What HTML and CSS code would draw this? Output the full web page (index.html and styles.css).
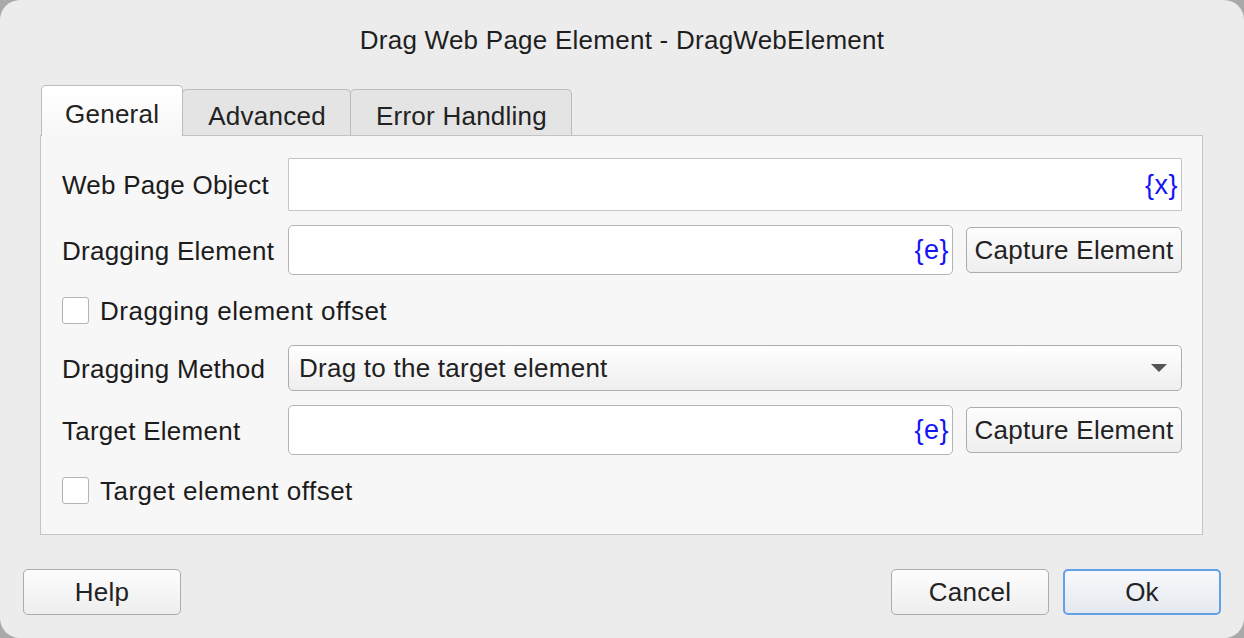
FILE: index.html
```html
<!DOCTYPE html>
<html>
<head>
<meta charset="utf-8">
<link rel="stylesheet" href="styles.css">
</head>
<body>
<div class="dialog">
  <div class="title">Drag Web Page Element - DragWebElement</div>
  <div class="tabs">
    <div class="tab active">General</div>
    <div class="tab">Advanced</div>
    <div class="tab">Error Handling</div>
  </div>
  <div class="panel">
    <div class="row row-obj">
      <span class="lbl">Web Page Object</span>
      <div class="field flat"><span class="var">{x}</span></div>
    </div>
    <div class="row row-el">
      <span class="lbl">Dragging Element</span>
      <div class="field round"><span class="var">{e}</span></div>
      <button class="btn cap">Capture Element</button>
    </div>
    <div class="check-row">
      <span class="box"></span>
      <span class="check-text">Dragging element offset</span>
    </div>
    <div class="row row-sel">
      <span class="lbl">Dragging Method</span>
      <div class="select">
        <span class="sel-text">Drag to the target element</span>
        <span class="arrow"></span>
      </div>
    </div>
    <div class="row row-el">
      <span class="lbl">Target Element</span>
      <div class="field round"><span class="var">{e}</span></div>
      <button class="btn cap">Capture Element</button>
    </div>
    <div class="check-row">
      <span class="box"></span>
      <span class="check-text">Target element offset</span>
    </div>
  </div>
  <div class="footer">
    <button class="btn foot">Help</button>
    <div class="spacer"></div>
    <button class="btn foot">Cancel</button>
    <button class="btn foot ok">Ok</button>
  </div>
</div>
</body>
</html>
```

FILE: styles.css
```css
* { box-sizing: border-box; }
html, body { margin: 0; padding: 0; }
body {
  background: #a9a9a9;
  font-family: "Liberation Sans", Arial, sans-serif;
  font-size: 26px;
  letter-spacing: 0.25px;
  color: #1c1c1c;
}
.dialog {
  width: 1244px;
  height: 638px;
  background: #ececec;
  border-radius: 20px;
  display: flex;
  flex-direction: column;
  overflow: hidden;
}
.title {
  padding-top: 25px;
  height: 55px;
  line-height: 30px;
  text-align: center;
  color: #1e1e1e;
}
.tabs {
  margin-top: 30px;
  margin-left: 41px;
  height: 50px;
  display: flex;
  align-items: flex-end;
}
.tab {
  height: 46px;
  padding: 11px 24px 0 25px;
  line-height: 30px;
  border: 1px solid #bcbcbc;
  border-bottom: none;
  border-radius: 5px 5px 0 0;
  background: #e4e4e4;
  color: #222;
  margin-left: -1px;
}
.tab:first-child { margin-left: 0; }
.tab.active {
  height: 51px;
  margin-bottom: -1px;
  padding: 13px 23px 0;
  background: linear-gradient(#ffffff, #f7f7f7);
  position: relative;
  z-index: 1;
}
.panel {
  margin-left: 40px;
  width: 1163px;
  height: 400px;
  border: 1px solid #c4c4c4;
  background: #f7f7f7;
  padding: 22px 20px 0 21px;
  display: flex;
  flex-direction: column;
}
.row {
  display: flex;
  align-items: center;
}
.lbl {
  width: 226px;
  flex: none;
  line-height: 30px;
  padding-top: 1px;
}
.row-obj { height: 53px; }
.row-el { height: 50px; margin-top: 14px; }
.row-sel { height: 46px; margin-top: 21px; }
.field {
  flex: 1;
  height: 100%;
  background: #fff;
  display: flex;
  align-items: center;
  justify-content: flex-end;
  padding-right: 3px;
}
.field.flat {
  border: 1px solid #c6c6c6;
  border-radius: 1px;
}
.field.round {
  border: 1px solid #b4b4b4;
  border-radius: 5px;
}
.var {
  color: #1414f5;
  font-size: 27px;
  line-height: 30px;
  letter-spacing: 0.5px;
}
.btn {
  font-family: "Liberation Sans", Arial, sans-serif;
  font-size: 26px;
  letter-spacing: 0.25px;
  color: #222;
  border: 1px solid #acacac;
  border-radius: 5px;
  background: linear-gradient(#fdfdfd, #eeeeee);
  padding: 0;
  height: 46px;
  line-height: 30px;
}
.btn.cap {
  width: 216px;
  margin-left: 13px;
  flex: none;
}
.check-row {
  display: flex;
  align-items: center;
  height: 27px;
  margin-top: 22px;
}
.box {
  width: 27px;
  height: 27px;
  background: #fff;
  border: 1px solid #b4b4b4;
  border-radius: 3px;
  flex: none;
}
.check-text {
  margin-left: 11px;
  line-height: 30px;
  letter-spacing: 0.5px;
}
.select {
  flex: 1;
  height: 46px;
  border: 1px solid #adadad;
  border-radius: 5px;
  background: linear-gradient(#ffffff, #eeeeee);
  display: flex;
  align-items: center;
  padding: 0 14px 0 10px;
}
.sel-text { flex: 1; line-height: 30px; color: #222; }
.arrow {
  width: 0;
  height: 0;
  border-left: 8px solid transparent;
  border-right: 8px solid transparent;
  border-top: 8px solid #555;
}
.footer {
  margin-top: 34px;
  height: 46px;
  display: flex;
  padding: 0 23px;
}
.spacer { flex: 1; }
.btn.foot { width: 158px; }
.btn.ok {
  margin-left: 14px;
  border: 2px solid #62a0e8;
  background: linear-gradient(#f8f9fb, #e4e8ee);
}
```
